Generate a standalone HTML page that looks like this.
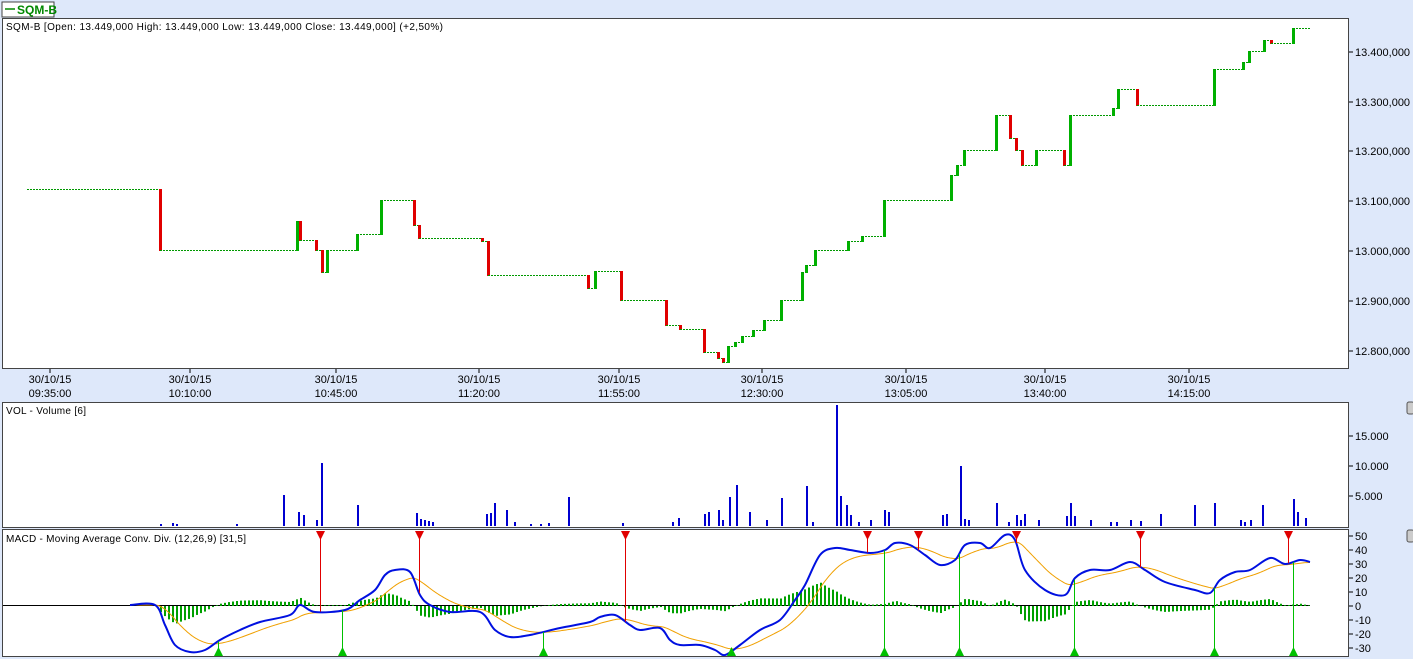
<!DOCTYPE html>
<html><head><meta charset="utf-8"><style>
body{margin:0;width:1413px;height:659px;background:#dee8fa;overflow:hidden;font-family:"Liberation Sans",sans-serif}
svg{position:absolute;left:0;top:0}
text{font-family:"Liberation Sans",sans-serif;font-size:11px;fill:#000}
</style></head><body>
<svg id="s" width="1413" height="659" xmlns="http://www.w3.org/2000/svg">
<rect x="2" y="2" width="52" height="15" fill="#fff" stroke="#444"/>
<line x1="5" y1="9" x2="15" y2="9" stroke="#080" stroke-width="1.5"/>
<text x="17" y="14" style="font-weight:bold;fill:#080;font-size:12px">SQM-B</text>
<rect x="2.5" y="18.5" width="1346" height="350" fill="#fff" stroke="#444"/>
<rect x="2.5" y="402.5" width="1346" height="125" fill="#fff" stroke="#444"/>
<rect x="2.5" y="529.5" width="1346" height="127" fill="#fff" stroke="#444"/>
<text x="6" y="30" style="font-size:10px" textLength="437" lengthAdjust="spacing">SQM-B [Open: 13.449,000  High: 13.449,000  Low: 13.449,000  Close: 13.449,000] (+2,50%)</text>
<text x="6" y="414" style="font-size:10px" textLength="80" lengthAdjust="spacing">VOL - Volume [6]</text>
<text x="6" y="542" style="font-size:10px" textLength="240" lengthAdjust="spacing">MACD - Moving Average Conv. Div. (12,26,9) [31,5]</text>
<g id="g"></g>
<rect x="1407" y="402" width="7" height="12" rx="2" fill="#ccc" stroke="#555"/>
<rect x="1407" y="530" width="7" height="12" rx="2" fill="#ccc" stroke="#555"/>
</svg>
<script>
const g=document.getElementById('g');let h='';
[[52,'13.400,000'],[102,'13.300,000'],[151,'13.200,000'],[201,'13.100,000'],[251,'13.000,000'],[301,'12.900,000'],[351,'12.800,000']].forEach(a=>{h+=`<line x1="1349" y1="${a[0]}" x2="1353" y2="${a[0]}" stroke="#000"/><text x="1355" y="${a[0]+4}">${a[1]}</text>`});
[[436,'15.000'],[466,'10.000'],[496,'5.000']].forEach(a=>{h+=`<line x1="1349" y1="${a[0]}" x2="1353" y2="${a[0]}" stroke="#000"/><text x="1355" y="${a[0]+4}">${a[1]}</text>`});
[50,40,30,20,10,0,-10,-20,-30].forEach(v=>{let y=606-v*1.4;h+=`<line x1="1349" y1="${y}" x2="1353" y2="${y}" stroke="#000"/><text x="1355" y="${y+4}">${v}</text>`});
[[50,'09:35:00'],[190,'10:10:00'],[336,'10:45:00'],[479,'11:20:00'],[619,'11:55:00'],[762,'12:30:00'],[906,'13:05:00'],[1045,'13:40:00'],[1189,'14:15:00']].forEach(a=>{h+=`<line x1="${a[0]}" y1="369" x2="${a[0]}" y2="373" stroke="#000"/><text x="${a[0]}" y="383" text-anchor="middle">30/10/15</text><text x="${a[0]}" y="397" text-anchor="middle">${a[1]}</text>`});
const st=[[27,189],[160,250],[297,221],[300,240],[316,250],[322,272],[327,250],[357,234],[381,200],[414,225],[419,238],[482,241],[488,275],[588,288],[595,271],[621,300],[666,325],[680,329],[704,352],[718,358],[723,362],[728,346],[735,342],[742,336],[753,330],[764,320],[781,300],[802,272],[806,265],[815,250],[848,241],[862,236],[884,200],[951,175],[957,165],[964,150],[996,115],[1010,138],[1016,150],[1022,165],[1036,150],[1064,165],[1070,115],[1113,108],[1118,89],[1137,105],[1214,69],[1243,62],[1249,51],[1264,40],[1271,43],[1293,28]];
for(let i=0;i<st.length;i++){const [x,y]=st[i];const nx=i+1<st.length?st[i+1][0]:1310;
h+=`<line x1="${x}" y1="${y+.5}" x2="${nx}" y2="${y+.5}" stroke="#090" stroke-dasharray="2,1"/>`;
if(i+1<st.length){const y2=st[i+1][1];const c=y2>y?'#e00000':'#00b000';h+=`<rect x="${nx-1}" y="${Math.min(y,y2)}" width="3" height="${Math.abs(y2-y)+1}" fill="${c}"/>`}}
const v=[[160,524],[172,523],[176,524],[236,524],[283,495],[298,512],[303,515],[316,520],[321,463],[357,505],[416,513],[420,519],[424,520],[428,521],[432,522],[486,514],[490,513],[494,503],[506,510],[514,522],[530,524],[540,524],[548,523],[568,497],[622,523],[672,522],[678,518],[704,514],[708,512],[718,510],[722,520],[729,497],[736,485],[749,512],[766,520],[781,498],[806,486],[812,522],[836,405],[840,496],[846,505],[850,515],[858,522],[870,520],[884,510],[888,512],[942,515],[946,514],[960,466],[964,519],[968,520],[996,503],[1008,522],[1016,515],[1020,520],[1024,514],[1038,520],[1066,516],[1070,503],[1074,516],[1090,520],[1110,522],[1116,522],[1130,520],[1140,521],[1160,514],[1194,505],[1214,503],[1240,520],[1244,522],[1250,520],[1262,505],[1293,499],[1297,512],[1305,518]];
v.forEach(a=>{h+=`<rect x="${a[0]}" y="${a[1]}" width="2" height="${526-a[1]}" fill="#0000d0"/>`});
const m=[[130,605],[155,605],[165,625],[175,645],[190,652],[205,650],[220,640],[240,630],[260,622],[290,615],[300,605],[315,612],[345,610],[360,600],[375,590],[385,575],[395,570],[410,572],[420,595],[430,605],[450,612],[480,612],[495,630],[510,637],[530,635],[560,628],[590,622],[600,617],[615,615],[630,625],[640,630],[660,628],[670,640],[680,645],[700,645],[715,650],[725,655],[740,645],[760,630],[780,620],[795,600],[805,585],[820,555],[835,548],[850,550],[870,553],[885,550],[895,543],[910,545],[925,555],[940,565],[955,560],[965,545],[980,543],[990,548],[1005,535],[1015,540],[1025,570],[1045,590],[1065,595],[1075,578],[1090,570],[1110,570],[1130,562],[1145,570],[1165,582],[1195,590],[1210,593],[1220,580],[1235,572],[1250,570],[1270,558],[1285,564],[1300,560],[1310,562]];
function at(x){for(let i=0;i<m.length-1;i++){if(x>=m[i][0]&&x<=m[i+1][0]){const t=(x-m[i][0])/(m[i+1][0]-m[i][0]);return m[i][1]+t*(m[i+1][1]-m[i][1])}}return m[m.length-1][1]}
let sig=[],s=605,hist='';for(let x=130;x<=1310;x++){const b=at(x);s+= (b-s)*0.045;sig.push([x,s]);if(x%4==0&&x>=160){const d=(s-b)*0.7;const y=Math.min(606,606-d);hist+=`<rect x="${x}" y="${y}" width="2" height="${Math.abs(d)}" fill="#00a000"/>`}}
h+=`<line x1="3" y1="605.5" x2="1310" y2="605.5" stroke="#000"/>`+hist;
h+=`<polyline fill="none" stroke="#f0a000" stroke-width="1" points="${sig.map(p=>p.join(',')).join(' ')}"/>`;
let d=`M${m[0][0]},${m[0][1]}`;for(let i=0;i<m.length-1;i++){const p0=m[Math.max(0,i-1)],p1=m[i],p2=m[i+1],p3=m[Math.min(m.length-1,i+2)];
d+=` C${p1[0]+(p2[0]-p0[0])/6},${p1[1]+(p2[1]-p0[1])/6} ${p2[0]-(p3[0]-p1[0])/6},${p2[1]-(p3[1]-p1[1])/6} ${p2[0]},${p2[1]}`}
h+=`<path fill="none" stroke="#0010e0" stroke-width="2" d="${d}"/>`;
[320,419,625,867,918,1016,1140,1288].forEach(x=>{h+=`<line x1="${x+.5}" y1="535" x2="${x+.5}" y2="${at(x)}" stroke="#e00000"/><polygon points="${x-4},531 ${x+5},531 ${x+.5},540" fill="#e00000"/>`});
[218,342,543,731,884,959,1074,1214,1293].forEach(x=>{h+=`<line x1="${x+.5}" y1="652" x2="${x+.5}" y2="${at(x)}" stroke="#00c000"/><polygon points="${x-4},656 ${x+5},656 ${x+.5},647" fill="#00c000"/>`});
g.innerHTML=h;
</script>
</body></html>
